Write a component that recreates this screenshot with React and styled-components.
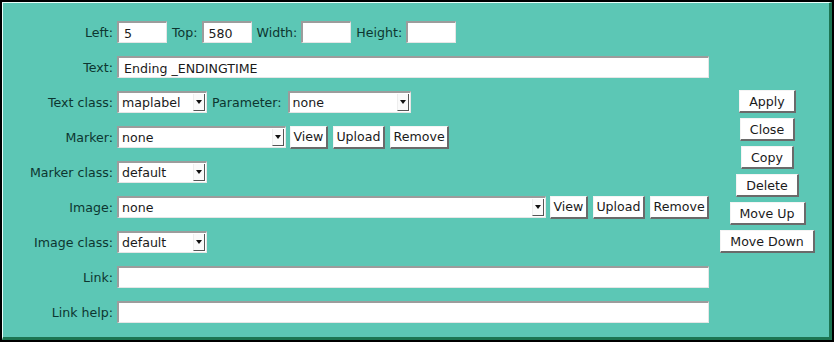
import React from "react";
import styled, { createGlobalStyle } from "styled-components";

const GlobalStyle = createGlobalStyle`
  html, body {
    margin: 0;
    padding: 0;
    background: #ffffff;
  }
  body {
    font-family: "DejaVu Sans", Verdana, sans-serif;
    font-size: 12.6px;
  }
`;

// outer frame: black line, then an outset edge round the teal panel
const Frame = styled.div`
  width: 830px;
  height: 338px;
  border: 2px solid #000;
`;

const Panel = styled.div`
  box-sizing: border-box;
  height: 100%;
  background: #5cc7b5;
  border-top: 1px solid #e8fff9;
  border-left: 1px solid #e8fff9;
  border-right: 3px solid #1c7552;
  border-bottom: 3px solid #1c7552;
  display: flex;
  padding-top: 18px;
`;

const Form = styled.div`
  width: 709px;
  display: grid;
  grid-template-columns: 110px 1fr;
  column-gap: 4px;
  row-gap: 13px;
  grid-auto-rows: 22px;
`;

const Label = styled.label`
  display: flex;
  align-items: center;
  justify-content: flex-end;
  color: #0d3630;
  white-space: nowrap;
`;

const InlineLabel = styled(Label)`
  justify-content: flex-start;
  margin-left: 1px;
  margin-right: ${(p) => p.$mr ?? 0}px;
`;

const Field = styled.div`
  display: flex;
  align-items: center;
  gap: 4px;
`;

const Buttons = styled.div`
  display: flex;
  gap: 5px;
`;

const TextInput = styled.input`
  box-sizing: border-box;
  width: ${(p) => p.$w || 592}px;
  height: 22px;
  margin: 0;
  padding: 1px 5px 0;
  font: inherit;
  color: #1a1a1a;
  background: #fff;
  border-style: solid;
  border-width: 2px 1px 1px 2px;
  border-color: #9c9c9c #e6e6e6 #e6e6e6 #9c9c9c;
  outline: none;
`;

const SelectBox = styled.div`
  box-sizing: border-box;
  width: ${(p) => p.$w}px;
  height: 22px;
  display: flex;
  align-items: center;
  background: #fff;
  border-style: solid;
  border-width: 2px 1px 1px 2px;
  border-color: #9c9c9c #e6e6e6 #e6e6e6 #9c9c9c;
  color: #1a1a1a;
`;

const SelectValue = styled.span`
  flex: 1;
  padding-left: 3px;
  white-space: nowrap;
  overflow: hidden;
`;

const Arrow = styled.span`
  box-sizing: border-box;
  width: 12px;
  height: 17px;
  margin-right: 1px;
  display: flex;
  align-items: center;
  justify-content: center;
  border-right: 1px solid #555;
  border-bottom: 1px solid #555;
  border-left: 1px solid #eee;
  background: #fafafa;
  &::after {
    content: "";
    border-left: 3px solid transparent;
    border-right: 3px solid transparent;
    border-top: 4px solid #111;
  }
`;

const Button = styled.button`
  box-sizing: border-box;
  height: 23px;
  margin: 0;
  padding: 0 ${(p) => p.$pad ?? 2.5}px;
  font: inherit;
  color: #1a1a1a;
  background: #fff;
  border-style: solid;
  border-width: 1px 2px 2px 1px;
  border-color: #f4f4f4 #6a6a6a #6a6a6a #f4f4f4;
  white-space: nowrap;
  cursor: pointer;
`;

const Actions = styled.div`
  flex: 1;
  display: flex;
  flex-direction: column;
  align-items: center;
  justify-content: center;
  gap: 5px;
  padding-right: 6px;
  padding-bottom: 15px;
`;

const Select = ({ w, value }) => (
  <SelectBox $w={w}>
    <SelectValue>{value}</SelectValue>
    <Arrow />
  </SelectBox>
);

const FileButtons = () => (
  <Buttons>
    <Button>View</Button>
    <Button>Upload</Button>
    <Button>Remove</Button>
  </Buttons>
);

export default function App() {
  return (
    <>
      <GlobalStyle />
      <Frame>
        <Panel>
          <Form>
            <Label>Left:</Label>
            <Field>
              <TextInput $w={50} defaultValue="5" />
              <InlineLabel>Top:</InlineLabel>
              <TextInput $w={50} defaultValue="580" />
              <InlineLabel>Width:</InlineLabel>
              <TextInput $w={50} />
              <InlineLabel>Height:</InlineLabel>
              <TextInput $w={50} />
            </Field>

            <Label>Text:</Label>
            <Field>
              <TextInput defaultValue="Ending _ENDINGTIME" />
            </Field>

            <Label>Text class:</Label>
            <Field>
              <Select w={90} value="maplabel" />
              <InlineLabel $mr={2}>Parameter:</InlineLabel>
              <Select w={123} value="none" />
            </Field>

            <Label>Marker:</Label>
            <Field>
              <Select w={169} value="none" />
              <FileButtons />
            </Field>

            <Label>Marker class:</Label>
            <Field>
              <Select w={90} value="default" />
            </Field>

            <Label>Image:</Label>
            <Field>
              <Select w={429} value="none" />
              <FileButtons />
            </Field>

            <Label>Image class:</Label>
            <Field>
              <Select w={90} value="default" />
            </Field>

            <Label>Link:</Label>
            <Field>
              <TextInput />
            </Field>

            <Label>Link help:</Label>
            <Field>
              <TextInput />
            </Field>
          </Form>

          <Actions>
            <Button $pad={9}>Apply</Button>
            <Button $pad={9}>Close</Button>
            <Button $pad={9}>Copy</Button>
            <Button $pad={9}>Delete</Button>
            <Button $pad={9}>Move Up</Button>
            <Button $pad={9}>Move Down</Button>
          </Actions>
        </Panel>
      </Frame>
    </>
  );
}
